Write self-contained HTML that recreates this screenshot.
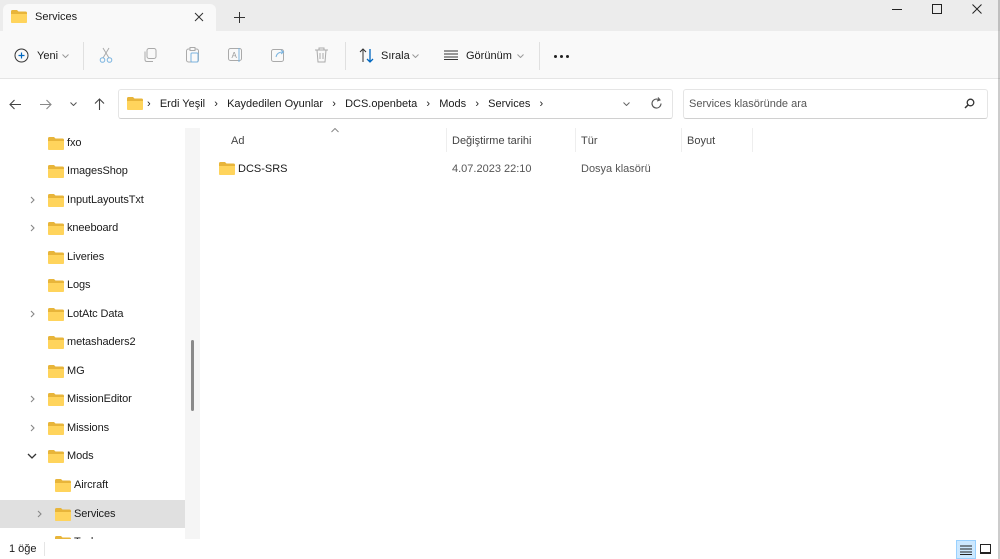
<!DOCTYPE html>
<html><head><meta charset="utf-8"><style>
*{margin:0;padding:0;box-sizing:border-box}
body{width:1000px;height:559px;overflow:hidden;background:#fff;font-family:"Liberation Sans",sans-serif;font-size:11px;color:#1a1a1a;position:relative}
.a{position:absolute}
.fold{position:absolute;width:16px;height:13px}
.tree .it{position:absolute;left:0;height:28px;width:185px}
.tree .it span{position:absolute;top:8px;font-size:11px;letter-spacing:-0.1px}
.chev{position:absolute}
.dd{position:absolute;width:7px;height:4px}
</style></head><body>
<svg width="0" height="0" style="position:absolute"><defs>
<g id="f"><path d="M0 1.5Q0 0 1.5 0H6l1.5 1.5H14.5Q16 1.5 16 3V11.5Q16 13 14.5 13H1.5Q0 13 0 11.5Z" fill="#e8b53a"/><path d="M0 4H16V11.5Q16 13 14.5 13H1.5Q0 13 0 11.5Z" fill="#ffd45c"/></g>
<g id="r"><path d="M2 1l3 3-3 3" fill="none" stroke="#888" stroke-width="1.1"/></g>
<g id="d"><path d="M0.5 0.5l3 3 3-3" fill="none" stroke="#999" stroke-width="1"/></g>
</defs></svg>
<!-- title bar -->
<div class="a" style="left:0;top:0;width:1000px;height:31px;background:#ececec"></div>
<div class="a" style="left:3px;top:4px;width:213px;height:27px;background:#f9f9f9;border-radius:6px 6px 0 0"></div>
<svg class="fold" style="left:11px;top:10px" viewBox="0 0 16 13"><use href="#f"/></svg>
<div class="a" style="left:35px;top:11px">Services</div>
<svg class="a" style="left:194px;top:12px" width="10" height="10"><path d="M1 1l8 8M9 1l-8 8" stroke="#333" stroke-width="1"/></svg>
<svg class="a" style="left:234px;top:12px" width="11" height="11"><path d="M5.5 0v11M0 5.5h11" stroke="#333" stroke-width="1"/></svg>
<div class="a" style="left:892px;top:9px;width:10px;height:1px;background:#222"></div>
<div class="a" style="left:932px;top:4px;width:10px;height:10px;border:1px solid #222"></div>
<svg class="a" style="left:972px;top:4px" width="10" height="10"><path d="M0.5 0.5l9 9M9.5 0.5l-9 9" stroke="#222" stroke-width="1"/></svg>
<!-- toolbar -->
<div class="a" style="left:0;top:31px;width:1000px;height:48px;background:#f9f9f9;border-bottom:1px solid #e5e5e5"></div>
<svg class="a" style="left:14px;top:48px" width="15" height="15" viewBox="0 0 15 15"><circle cx="7.5" cy="7.5" r="6.5" fill="none" stroke="#333"/><path d="M7.5 4.5v6M4.5 7.5h6" stroke="#0067c0" stroke-width="1.2"/></svg>
<div class="a" style="left:37px;top:50px">Yeni</div><svg class="dd" style="left:62px;top:54px"><use href="#d"/></svg>
<div class="a" style="left:83px;top:42px;width:1px;height:28px;background:#e0e0e0"></div>
<svg class="a" style="left:99px;top:47px" width="14" height="16"><path d="M4 1l6 10M10 1L4 11" stroke="#aaa" fill="none"/><circle cx="3.5" cy="13" r="2.3" fill="none" stroke="#7ab4e0"/><circle cx="10.5" cy="13" r="2.3" fill="none" stroke="#7ab4e0"/></svg>
<svg class="a" style="left:143px;top:48px" width="14" height="14"><rect x="4" y="0.5" width="9" height="10" rx="2" fill="none" stroke="#aaa"/><path d="M2 3.5v8q0 2 2 2h6" fill="none" stroke="#aaa"/></svg>
<svg class="a" style="left:186px;top:47px" width="14" height="16"><rect x="0.5" y="2" width="12" height="13" rx="2" fill="none" stroke="#aaa"/><rect x="4" y="0.5" width="5" height="3" fill="#f9f9f9" stroke="#aaa"/><rect x="5" y="6" width="7" height="9" rx="1" fill="none" stroke="#7ab4e0"/></svg>
<svg class="a" style="left:228px;top:48px" width="16" height="14"><rect x="0.5" y="0.5" width="13" height="12" rx="2" fill="none" stroke="#aaa"/><text x="3.5" y="10" font-size="8" fill="#999" font-family="Liberation Sans">A</text><path d="M11 0v14" stroke="#7ab4e0"/></svg>
<svg class="a" style="left:271px;top:48px" width="15" height="14"><rect x="0.5" y="1.5" width="12" height="12" rx="2" fill="none" stroke="#aaa"/><path d="M5 9q1-5 7-5M10 2l2.5 2-2.5 2" fill="none" stroke="#7ab4e0"/></svg>
<svg class="a" style="left:315px;top:47px" width="13" height="16"><path d="M0 3h13M4 3V1h5v2M2 3l1 12h7l1-12M5 6v6M8 6v6" fill="none" stroke="#aaa"/></svg>
<div class="a" style="left:345px;top:42px;width:1px;height:28px;background:#e0e0e0"></div>
<svg class="a" style="left:359px;top:48px" width="16" height="15"><path d="M4 14V1M1 4l3-3 3 3" fill="none" stroke="#333"/><path d="M11 1v13M8 11l3 3 3-3" fill="none" stroke="#0067c0" stroke-width="1.3"/></svg>
<div class="a" style="left:381px;top:50px">Sırala</div><svg class="dd" style="left:412px;top:54px"><use href="#d"/></svg>
<svg class="a" style="left:444px;top:50px" width="14" height="10"><path d="M0 1h14M0 4h14M0 7h14M0 9.5h14" stroke="#333"/></svg>
<div class="a" style="left:466px;top:50px">Görünüm</div><svg class="dd" style="left:517px;top:54px"><use href="#d"/></svg>
<div class="a" style="left:539px;top:42px;width:1px;height:28px;background:#e0e0e0"></div>
<div class="a" style="left:554px;top:55px;width:3px;height:3px;border-radius:50%;background:#222"></div>
<div class="a" style="left:560px;top:55px;width:3px;height:3px;border-radius:50%;background:#222"></div>
<div class="a" style="left:566px;top:55px;width:3px;height:3px;border-radius:50%;background:#222"></div>
<!-- address row -->
<svg class="a" style="left:9px;top:99px" width="13" height="11"><path d="M12 5.5H1M5.5 1L1 5.5 5.5 10" fill="none" stroke="#444" stroke-width="1.1"/></svg>
<svg class="a" style="left:39px;top:99px" width="13" height="11"><path d="M1 5.5h11M7.5 1L12 5.5 7.5 10" fill="none" stroke="#888" stroke-width="1.1"/></svg>
<svg class="dd" style="left:70px;top:102px"><path d="M0.5 0.5l3 3 3-3" fill="none" stroke="#555"/></svg>
<svg class="a" style="left:94px;top:98px" width="11" height="13"><path d="M5.5 12V1M1 5.5L5.5 1 10 5.5" fill="none" stroke="#444" stroke-width="1.1"/></svg>
<div class="a" style="left:118px;top:89px;width:555px;height:30px;border:1px solid #e5e5e5;border-bottom-color:#d0d0d0;border-radius:3px"></div>
<svg class="fold" style="left:127px;top:97px" viewBox="0 0 16 13"><use href="#f"/></svg>
<div class="a" style="left:147px;top:98px;white-space:pre">›   Erdi Yeşil   ›   Kaydedilen Oyunlar   ›   DCS.openbeta   ›   Mods   ›   Services   ›</div>
<svg class="dd" style="left:623px;top:102px"><path d="M0.5 0.5l3 3 3-3" fill="none" stroke="#666"/></svg>
<svg class="a" style="left:650px;top:97px" width="13" height="13"><path d="M11 6.5A4.5 4.5 0 1 1 9 2.8" fill="none" stroke="#555" stroke-width="1.1"/><path d="M8 0.5L10 3 7 4" fill="none" stroke="#555" stroke-width="1.1"/></svg>
<div class="a" style="left:683px;top:89px;width:305px;height:30px;border:1px solid #e5e5e5;border-bottom-color:#d0d0d0;border-radius:3px"></div>
<div class="a" style="left:689px;top:98px;color:#555">Services klasöründe ara</div>
<svg class="a" style="left:964px;top:98px" width="11" height="11"><circle cx="6.5" cy="4.5" r="3.3" fill="none" stroke="#333" stroke-width="1.3"/><path d="M4 7L1 10" stroke="#333" stroke-width="1.5"/></svg>
<!-- tree -->
<div class="a" style="left:185px;top:128px;width:15px;height:411px;background:#f5f5f5"></div>
<div class="a" style="left:191px;top:340px;width:3px;height:71px;background:#8a8a8a;border-radius:2px"></div>
<div class="a tree" style="left:0;top:128px;width:185px;height:411px;overflow:hidden">
<div class="it" style="top:1px"><svg class="fold" style="left:48px;top:8px" viewBox="0 0 16 13"><use href="#f"/></svg><span style="left:67px">fxo</span></div>
<div class="it" style="top:29px"><svg class="fold" style="left:48px;top:8px" viewBox="0 0 16 13"><use href="#f"/></svg><span style="left:67px">ImagesShop</span></div>
<div class="it" style="top:58px"><svg class="chev" style="left:29px;top:10px" width="8" height="8"><use href="#r"/></svg><svg class="fold" style="left:48px;top:8px" viewBox="0 0 16 13"><use href="#f"/></svg><span style="left:67px">InputLayoutsTxt</span></div>
<div class="it" style="top:86px"><svg class="chev" style="left:29px;top:10px" width="8" height="8"><use href="#r"/></svg><svg class="fold" style="left:48px;top:8px" viewBox="0 0 16 13"><use href="#f"/></svg><span style="left:67px">kneeboard</span></div>
<div class="it" style="top:115px"><svg class="fold" style="left:48px;top:8px" viewBox="0 0 16 13"><use href="#f"/></svg><span style="left:67px">Liveries</span></div>
<div class="it" style="top:143px"><svg class="fold" style="left:48px;top:8px" viewBox="0 0 16 13"><use href="#f"/></svg><span style="left:67px">Logs</span></div>
<div class="it" style="top:172px"><svg class="chev" style="left:29px;top:10px" width="8" height="8"><use href="#r"/></svg><svg class="fold" style="left:48px;top:8px" viewBox="0 0 16 13"><use href="#f"/></svg><span style="left:67px">LotAtc Data</span></div>
<div class="it" style="top:200px"><svg class="fold" style="left:48px;top:8px" viewBox="0 0 16 13"><use href="#f"/></svg><span style="left:67px">metashaders2</span></div>
<div class="it" style="top:229px"><svg class="fold" style="left:48px;top:8px" viewBox="0 0 16 13"><use href="#f"/></svg><span style="left:67px">MG</span></div>
<div class="it" style="top:257px"><svg class="chev" style="left:29px;top:10px" width="8" height="8"><use href="#r"/></svg><svg class="fold" style="left:48px;top:8px" viewBox="0 0 16 13"><use href="#f"/></svg><span style="left:67px">MissionEditor</span></div>
<div class="it" style="top:286px"><svg class="chev" style="left:29px;top:10px" width="8" height="8"><use href="#r"/></svg><svg class="fold" style="left:48px;top:8px" viewBox="0 0 16 13"><use href="#f"/></svg><span style="left:67px">Missions</span></div>
<div class="it" style="top:314px"><svg class="a" style="left:27px;top:11px" width="10" height="6"><path d="M1 1l4 4 4-4" fill="none" stroke="#333" stroke-width="1.3"/></svg><svg class="fold" style="left:48px;top:8px" viewBox="0 0 16 13"><use href="#f"/></svg><span style="left:67px">Mods</span></div>
<div class="it" style="top:343px"><svg class="fold" style="left:55px;top:8px" viewBox="0 0 16 13"><use href="#f"/></svg><span style="left:74px">Aircraft</span></div>
<div class="it" style="top:372px;background:#e0e0e0"><svg class="chev" style="left:36px;top:10px" width="8" height="8"><use href="#r"/></svg><svg class="fold" style="left:55px;top:8px" viewBox="0 0 16 13"><use href="#f"/></svg><span style="left:74px">Services</span></div>
<div class="it" style="top:400px"><svg class="fold" style="left:55px;top:8px" viewBox="0 0 16 13"><use href="#f"/></svg><span style="left:74px">Tech</span></div>
</div>
<!-- list header -->
<svg class="a" style="left:331px;top:128px" width="8" height="5"><path d="M0.5 4l3.5-3.5 3.5 3.5" fill="none" stroke="#888"/></svg>
<div class="a" style="left:231px;top:135px;color:#444">Ad</div>
<div class="a" style="left:446px;top:128px;width:1px;height:24px;background:#eee"></div>
<div class="a" style="left:452px;top:135px;color:#444">Değiştirme tarihi</div>
<div class="a" style="left:575px;top:128px;width:1px;height:24px;background:#eee"></div>
<div class="a" style="left:581px;top:135px;color:#444">Tür</div>
<div class="a" style="left:681px;top:128px;width:1px;height:24px;background:#eee"></div>
<div class="a" style="left:687px;top:135px;color:#444">Boyut</div>
<div class="a" style="left:752px;top:128px;width:1px;height:24px;background:#eee"></div>
<svg class="fold" style="left:219px;top:162px" viewBox="0 0 16 13"><use href="#f"/></svg>
<div class="a" style="left:238px;top:163px">DCS-SRS</div>
<div class="a" style="left:452px;top:163px;color:#555">4.07.2023 22:10</div>
<div class="a" style="left:581px;top:163px;color:#555">Dosya klasörü</div>
<!-- status -->
<div class="a" style="left:9px;top:543px">1 öğe</div>
<div class="a" style="left:44px;top:542px;width:1px;height:14px;background:#e5e5e5"></div>
<div class="a" style="left:956px;top:540px;width:20px;height:19px;background:#cce8ff;border:1px solid #99d1ff"></div>
<svg class="a" style="left:960px;top:545px" width="12" height="10"><path d="M0 1h12M0 4h12M0 7h12M0 9.5h12" stroke="#222"/></svg>
<div class="a" style="left:980px;top:544px;width:11px;height:10px;border:1px solid #222;border-bottom-width:2px"></div>
<div class="a" style="left:998px;top:0;width:2px;height:559px;background:#555;opacity:.3"></div>
</body></html>
